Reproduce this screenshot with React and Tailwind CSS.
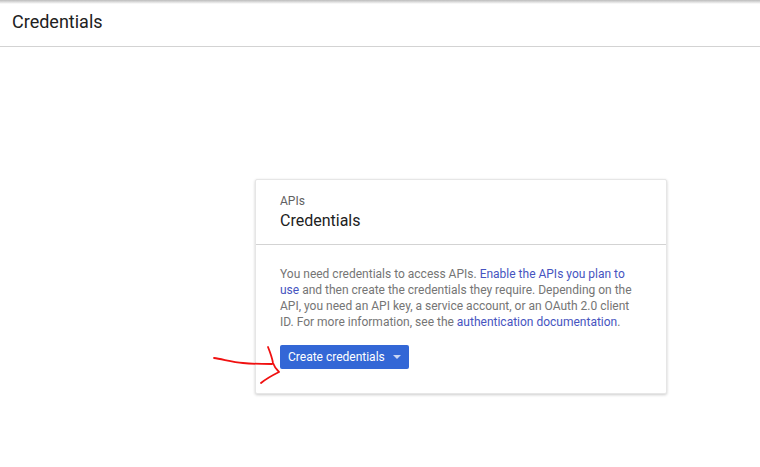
export default function App() {
  return (
    <div className="relative h-[467px] w-[760px] overflow-hidden bg-white font-['Roboto',sans-serif]">
      {/* top edge shadow + page title */}
      <div className="h-[4px] bg-gradient-to-b from-[#bcbcbc] to-white" />
      <header className="flex h-[43px] items-center border-b border-[#d3d3d3] pb-[6px] pl-3">
        <h1 className="text-[18px] font-normal leading-6 text-[#212121]">Credentials</h1>
      </header>

      <main className="ml-[255px] mt-[132px] w-[412px]">
        <section className="h-[215px] rounded-[2px] border border-[#e6e6e6] bg-white shadow-[0_1px_3px_rgba(0,0,0,0.2)]">
          <div className="h-[65px] border-b border-[#d3d3d3] px-6 pt-[14px]">
            <p className="text-[12px] leading-[14px] text-[#616161]">APIs</p>
            <h2 className="mt-[1px] text-[16px] font-normal leading-6 text-[#212121]">Credentials</h2>
          </div>
          <div className="px-6 pt-[21px]">
            <p className="w-[364px] text-[12px] leading-4 text-[#757575]">
              You need credentials to access APIs.{' '}
              <a className="text-[#4654c0]">Enable the APIs you plan to use</a> and then create the credentials they
              require. Depending on the API, you need an API key, a service account, or an OAuth 2.0 client ID. For
              more information, see the <a className="text-[#4654c0]">authentication documentation</a>.
            </p>
            <button
              type="button"
              className="mt-[15px] flex h-6 w-[129px] items-center rounded-[2px] bg-[#3367d6] pl-2 text-[12px] font-normal text-white"
            >
              Create credentials
              <span className="ml-2 h-0 w-0 border-x-4 border-t-4 border-x-transparent border-t-[#c9d6f3]" />
            </button>
          </div>
        </section>
      </main>

      {/* red hand-drawn arrow over the page */}
      <svg className="absolute left-[210px] top-[340px]" width="70" height="50" viewBox="0 0 70 50" fill="none">
        <path
          d="M4 18 C12 19 22 22 33 23 C42 24 52 24 62 24 M58 7 C60 12 62 17 63 23 C64 26 66 29 69 32 C63 35 57 38 51 43"
          stroke="#f01010"
          strokeWidth="1.8"
          strokeLinecap="round"
          strokeLinejoin="round"
        />
      </svg>
    </div>
  );
}
